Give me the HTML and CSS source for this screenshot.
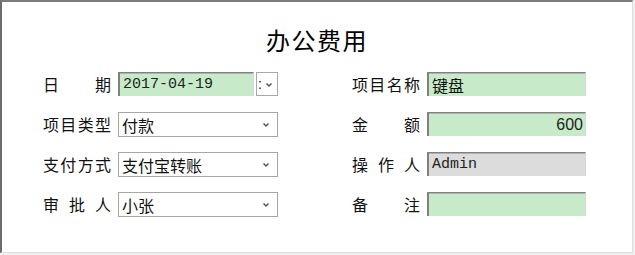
FILE: index.html
```html
<!DOCTYPE html>
<html lang="zh-CN">
<head>
<meta charset="utf-8">
<title>办公费用</title>
<link rel="stylesheet" href="styles.css">
</head>
<body>
<div class="frame">
  <h1 class="title">办公费用</h1>
  <div class="form">
    <span class="label">日期</span>
    <div class="date-wrap">
      <span class="field green mono date">2017-04-19</span>
      <span class="mini-select"><span class="colon">:</span><svg class="chev" width="8" height="6" viewBox="0 0 8 6"><path d="M1.5 1.5 L4 4 L6.5 1.5" fill="none" stroke="#555" stroke-width="1.5"/></svg></span>
    </div>
    <span class="label right">项目名称</span>
    <span class="field green">键盘</span>

    <span class="label">项目类型</span>
    <span class="select">付款<svg class="chev" width="8" height="6" viewBox="0 0 8 6"><path d="M1.5 1.5 L4 4 L6.5 1.5" fill="none" stroke="#555" stroke-width="1.5"/></svg></span>
    <span class="label right">金额</span>
    <span class="field green num">600</span>

    <span class="label">支付方式</span>
    <span class="select">支付宝转账<svg class="chev" width="8" height="6" viewBox="0 0 8 6"><path d="M1.5 1.5 L4 4 L6.5 1.5" fill="none" stroke="#555" stroke-width="1.5"/></svg></span>
    <span class="label right">操作人</span>
    <span class="field gray mono">Admin</span>

    <span class="label">审批人</span>
    <span class="select">小张<svg class="chev" width="8" height="6" viewBox="0 0 8 6"><path d="M1.5 1.5 L4 4 L6.5 1.5" fill="none" stroke="#555" stroke-width="1.5"/></svg></span>
    <span class="label right">备注</span>
    <span class="field green"></span>
  </div>
</div>
</body>
</html>
```

FILE: styles.css
```css
html, body {
  margin: 0;
  padding: 0;
  background: #f0f0f0;
}

body {
  font-family: "Noto Sans CJK SC", "Noto Sans", sans-serif;
  color: #111;
}

.frame {
  box-sizing: border-box;
  width: 633px;
  height: 253px;
  background: #fff;
  border-top: 2px solid #7c7c7c;
  border-left: 2px solid #6c6c6c;
  border-right: 1px solid #dedede;
  border-bottom: 1px solid #dedede;
}

.title {
  margin: 26px 0 20px;
  height: 24px;
  line-height: 24px;
  font-size: 24px;
  font-weight: normal;
  text-align: center;
  letter-spacing: 1.5px;
  color: #000;
}

.form {
  display: grid;
  grid-template-columns: 68px 160px 135px 159px;
  grid-auto-rows: 24px;
  column-gap: 7px;
  row-gap: 16px;
  padding-left: 41px;
}

.label {
  width: 68px;
  font-size: 16px;
  line-height: 24px;
  text-align: justify;
  text-align-last: justify;
  color: #111;
}

.label.right {
  justify-self: end;
}

.date-wrap {
  display: flex;
  gap: 2px;
}

.field {
  box-sizing: border-box;
  height: 24px;
  display: flex;
  align-items: center;
  padding: 0 3px;
  font-size: 16px;
  white-space: nowrap;
  overflow: hidden;
  border-style: solid;
  border-width: 1px 1px 0 2px;
  border-color: #808080 #d8d8d8 #d8d8d8 #808080;
  box-shadow: inset 0 1px 0 #b0b0b0;
}

.date {
  width: 136px;
}

.green {
  background: #c7ebc8;
}

.gray {
  background: #dcdcdc;
}

.mono {
  font-family: "Liberation Mono", "DejaVu Sans Mono", monospace;
  font-size: 15px;
  color: #222;
}

.num {
  justify-content: flex-end;
  font-family: "Liberation Sans", Arial, sans-serif;
  font-size: 16px;
  color: #222;
  padding-right: 2px;
}

.mini-select {
  box-sizing: border-box;
  width: 22px;
  height: 24px;
  border: 1px solid #a8a8a8;
  background: #fff;
  display: flex;
  align-items: center;
  position: relative;
  font-size: 14px;
}

.colon {
  padding-left: 1px;
  font-family: "Liberation Sans", sans-serif;
}

.mini-select .chev {
  position: absolute;
  right: 4px;
  top: 9px;
}

.select {
  box-sizing: border-box;
  height: 25px;
  border: 1px solid #a6a6a6;
  background: #fff;
  display: flex;
  align-items: center;
  padding-left: 3px;
  font-size: 16px;
  position: relative;
}

.select .chev {
  position: absolute;
  right: 7px;
  top: 9px;
}
```
